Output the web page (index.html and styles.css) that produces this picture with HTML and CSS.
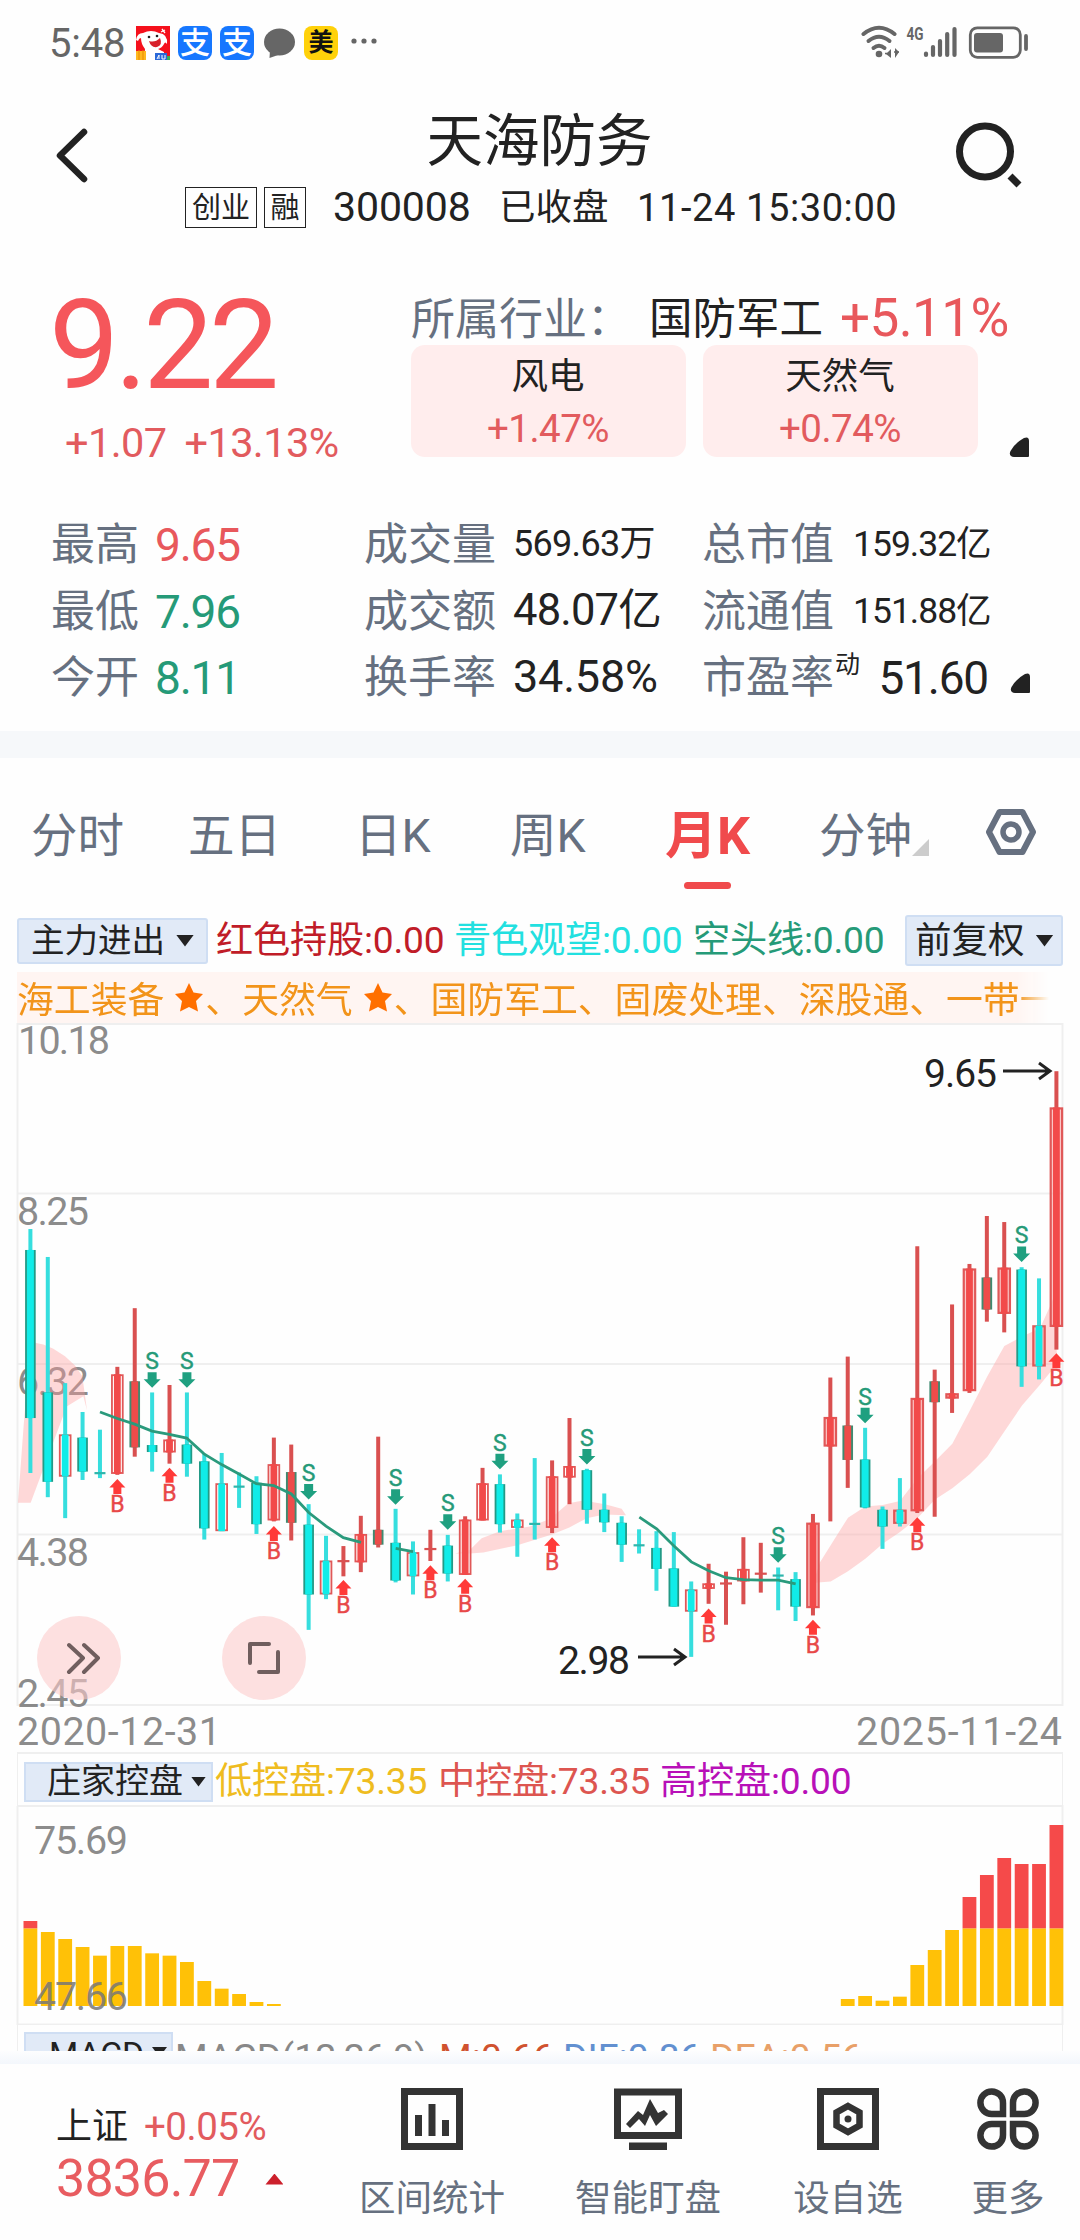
FILE: index.html
```html
<!DOCTYPE html>
<html lang="zh-CN">
<head>
<meta charset="utf-8">
<title>天海防务 300008</title>
<link rel="stylesheet" href="styles.css">
</head>
<body>
<div class="screen">
  <div class="status">
    <span class="clock">5:48</span>
    <svg class="app" viewBox="0 0 34 34"><rect width="34" height="34" fill="#f5101c"/><path d="M0 14Q1 7 7 7Q15 3 23 7Q32 8 31 18Q29 15 28 18Q26 22 22 23L28 26V34H8L9 23Q5 18 5 12Q3 12 2 15Z" fill="#fff"/><path d="M13 15Q19 17 24 12Q27 19 21 21Q15 22 13 15Z" fill="#d8202a"/><circle cx="13" cy="11" r="1.300" fill="#222"/><circle cx="21" cy="10" r="1.300" fill="#222"/><path d="M25 6l4-2M26 3l3 4" stroke="#fff" stroke-width="1.300"/><path d="M0 25H10V34H0Z" fill="#ffb81f"/><path d="M3 24V34M7 24V34" stroke="#e98b00"/><path d="M19 27H31V34H19Z" fill="#2a68d8"/><path d="M21 33l2-4v4M26 29v4h3v-4" stroke="#fff" fill="none"/><path d="M31 30h3v4h-3z" fill="#35b35a"/></svg>
    <span class="app alipay">支</span>
    <span class="app alipay">支</span>
    <svg class="app" viewBox="0 0 34 34"><ellipse cx="17.500" cy="16" rx="15.500" ry="13.500" fill="#666"/><path d="M8 24L7.500 32L19 28Z" fill="#666"/></svg>
    <span class="app meituan">美</span>
    <svg class="dots" viewBox="0 0 30 34"><g fill="#666"><circle cx="6" cy="15" r="2.600"/><circle cx="16" cy="15" r="2.600"/><circle cx="26" cy="15" r="2.600"/></g></svg>
    <svg class="signal" viewBox="860 20 172 44">
      <g fill="none" stroke="#666" stroke-width="4" stroke-linecap="round"><path d="M863.500 32Q879 19.500 894.500 32"/><path d="M868.500 39Q879 30.500 889.500 39"/><path d="M873.500 46Q879 41.500 884.500 46"/></g>
      <circle cx="879" cy="52" r="3.300" fill="#666"/><path d="M886 52l5-5v9zM899 50l-4-4v10z" fill="#666"/><path d="M885 51.500h6M894 50h5" stroke="#666" stroke-width="1.500"/>
      <text x="906.500" y="38" class="net" textLength="17" lengthAdjust="spacingAndGlyphs">4G</text>
      <g stroke="#666" stroke-width="4.200" stroke-linecap="round"><path d="M926 51.500V53M933 45V53M940 39V53M947.200 32V53M954.500 27V53"/></g>
      <rect x="970.300" y="25.800" width="50" height="29.500" rx="7" fill="none" stroke="#666" stroke-width="2.800"/><rect x="974" y="31" width="29" height="19.500" rx="3" fill="#666"/><path d="M1026 34V47" stroke="#666" stroke-width="3.800" stroke-linecap="round"/>
    </svg>
  </div>

  <div class="header">
    <svg class="back" viewBox="0 0 60 60"><path d="M43 7L19 30.500L43 54" fill="none" stroke="#222" stroke-width="6.500" stroke-linecap="round" stroke-linejoin="round"/></svg>
    <div class="heading">
      <h1>天海防务</h1>
      <div class="sub"><span class="tag">创业</span><span class="tag">融</span><span class="code">300008</span><span class="closed">已收盘</span><span class="time"><span>11-24</span> <span>15:30:00</span></span></div>
    </div>
    <svg class="search" viewBox="0 0 72 72"><circle cx="32" cy="31.500" r="25.500" fill="none" stroke="#222" stroke-width="7"/><path d="M57 56L66 65" stroke="#222" stroke-width="7"/></svg>
  </div>

  <div class="quote">
    <div>
      <div class="price">9.22</div>
      <div class="delta"><span>+1.07</span><span>+13.13%</span></div>
    </div>
    <div>
      <div class="industry"><span class="lbl">所属行业：</span><span>国防军工</span><span class="pct">+5.11%</span></div>
      <div class="cards">
        <div class="card"><div>风电</div><div class="up">+1.47%</div></div>
        <div class="card"><div>天然气</div><div class="up">+0.74%</div></div>
        <svg class="more" viewBox="0 0 20 20"><path d="M2 19Q0 17 1.500 14Q6 6 15 1Q20 -1 20 4V19Q20 20 19 20H5Q3 20 2 19Z" fill="#222"/></svg>
      </div>
    </div>
  </div>

  <div class="stats">
    <span class="lbl">最高</span><span class="num red">9.65</span><span class="lbl">成交量</span><span class="num small vol">569.63万</span><span class="lbl">总市值</span><span class="num small last">159.32亿</span><span></span>
    <span class="lbl">最低</span><span class="num green">7.96</span><span class="lbl">成交额</span><span class="num mid">48.07亿</span><span class="lbl">流通值</span><span class="num small last">151.88亿</span><span></span>
    <span class="lbl">今开</span><span class="num green">8.11</span><span class="lbl">换手率</span><span class="num mid rate">34.58%</span><span class="lbl">市盈率<sup>动</sup></span><span class="num last">51.60</span><svg class="more" viewBox="0 0 20 20"><path d="M2 19Q0 17 1.500 14Q6 6 15 1Q20 -1 20 4V19Q20 20 19 20H5Q3 20 2 19Z" fill="#222"/></svg>
  </div>
  <div class="band"></div>

  <div class="tabs">
    <span>分时</span><span>五日</span><span>日K</span><span>周K</span><span class="active">月K</span><span class="drop">分钟<i></i></span>
    <svg class="gear" viewBox="0 0 52 48"><path d="M14.500 4H37.500L48 24L37.500 44H14.500L4 24Z" fill="none" stroke="#667080" stroke-width="6" stroke-linejoin="round"/><circle cx="26" cy="24" r="8" fill="none" stroke="#667080" stroke-width="5.500"/></svg>
  </div>

  <div class="legend">
    <span class="select main">主力进出<i></i></span>
    <span class="c-hold">红色持股:0.00</span><span class="c-watch">青色观望:0.00</span><span class="c-short">空头线:0.00</span>
    <span class="select adj">前复权<i></i></span>
  </div>
  <div class="topics">海工装备<svg class="star" viewBox="0 0 41 36"><path d="M25 0l4.500 9.500 9.500 1.500-7 7 2 10.500L25 24 16 28.500 18 18 11 11 20.500 9.500z" fill="#ff6f00"/></svg>、天然气<svg class="star" viewBox="0 0 41 36"><path d="M25 0l4.500 9.500 9.500 1.500-7 7 2 10.500L25 24 16 28.500 18 18 11 11 20.500 9.500z" fill="#ff6f00"/></svg>、国防军工、固废处理、深股通、一带一路</div>

  <svg class="chart" id="kline" viewBox="0 1023 1080 729">
    <g fill="none" stroke="#efefef" stroke-width="2"><path d="M17.500 1024H1062.500V1705H17.500ZM17 1193.500H1062M17 1364H1062M17 1534.500H1062"/></g>
    <g class="axis">
      <text x="18" y="1053.500" textLength="92">10.18</text><text x="17" y="1224.500" textLength="72">8.25</text><text x="17" y="1394.500" textLength="72">6.32</text><text x="17" y="1565.500" textLength="72">4.38</text><text x="17" y="1706.500" textLength="72">2.45</text>
      <text x="17" y="1744.500" textLength="204">2020-12-31</text><text x="856" y="1744.500" textLength="206">2025-11-24</text>
    </g>
    <g id="bands"></g><g id="candles"></g><g id="lines"></g><g id="marks"></g>
    <g class="peak"><text x="924" y="1086.500" textLength="73">9.65</text><text x="558" y="1673.500" textLength="72">2.98</text></g>
    <g fill="none" stroke="#222" stroke-width="3"><path d="M1003 1071H1049M1039 1063L1050 1071L1039 1079M638 1657H684M674 1649L685 1657L674 1665"/></g>
    <g fill="#fccaca" fill-opacity=".58"><circle cx="79" cy="1658" r="42"/><circle cx="264" cy="1658" r="42"/></g>
    <g fill="none" stroke="#705e5e" stroke-width="4" stroke-linecap="round" stroke-linejoin="round"><path d="M69 1645L83 1658L69 1672M84 1645L98 1658L84 1672M250 1663V1644H269M259 1672H278V1652"/></g>
  </svg>

  <div class="legend control">
    <span class="select">庄家控盘<i></i></span>
    <span class="c-low">低控盘:73.35</span><span class="c-med">中控盘:73.35</span><span class="c-high">高控盘:0.00</span>
  </div>
  <svg class="chart" viewBox="0 1805 1080 220">
    <path d="M17 1806H1062.500V2025M17.500 1806V2025M17 2024.500H1063" fill="none" stroke="#efefef" stroke-width="2"/>
    <g id="bars"></g>
    <g class="axis"><text x="34" y="1853.500" textLength="94">75.69</text><text x="34" y="2009.500" textLength="94">47.66</text></g>
  </svg>
  <div class="legend macd">
    <span class="select">MACD<i></i></span>
    <span class="c-gray">MACD(12,26,9)</span><span class="c-m">M:0.66</span><span class="c-dif">DIF:0.86</span><span class="c-dea">DEA:0.56</span>
  </div>
  <div class="shade"></div>

  <div class="nav">
    <div class="index">
      <div class="row1"><span>上证</span><span class="up">+0.05%</span></div>
      <div class="row2"><span>3836.77</span><i></i></div>
    </div>
    <div class="item"><svg viewBox="0 0 62 62"><path d="M3.500 3.500H58.500V58.500H3.500Z" fill="none" stroke="#333" stroke-width="7"/><path d="M17.500 27V48M31 16V48M44.500 32V48" stroke="#333" stroke-width="7"/></svg><span>区间统计</span></div>
    <div class="item"><svg class="wide" viewBox="0 0 68 62"><path d="M3.500 4H64.500V47.500H3.500Z" fill="none" stroke="#333" stroke-width="7"/><path d="M15 54.500H53V62H15Z" fill="#333"/><path d="M12 36L24 23L29 27L36 11L44 25L50 22L54 26L42 38L36 27L31 38L25 31L16 40Z" fill="#333"/></svg><span>智能盯盘</span></div>
    <div class="item"><svg viewBox="0 0 62 62"><path d="M3.500 3.500H58.500V58.500H3.500Z" fill="none" stroke="#333" stroke-width="7"/><path d="M31 18L42.500 24.500V37.500L31 44L19.500 37.500V24.500Z" fill="none" stroke="#333" stroke-width="6.500"/><circle cx="31" cy="31" r="3.500" fill="#333"/></svg><span>设自选</span></div>
    <div class="item"><svg viewBox="0 0 62 62"><g fill="none" stroke="#333" stroke-width="6.500"><path d="M26 26H15A11.300 11.300 0 1 1 26 15Z"/><path d="M36 26H47A11.300 11.300 0 1 0 36 15Z"/><path d="M26 36H15A11.300 11.300 0 1 0 26 47Z"/><path d="M36 36H47A11.300 11.300 0 1 1 36 47Z"/></g></svg><span>更多</span></div>
  </div>
</div>
<script src="chart.js"></script>
</body>
</html>
```
FILE: styles.css
```css
* { box-sizing: border-box; }
body {
  margin: 0;
  background: #fefefe;
  font-family: Roboto, "Noto Sans CJK SC", sans-serif;
  color: #222;
}
svg { display: block; }
.screen { width: 1080px; height: 2240px; display: flex; flex-direction: column; overflow: hidden; white-space: nowrap; }
.screen > * { flex: none; }

/* status bar */
.status { height: 82px; padding: 0 49px; display: grid; grid-template-columns: 87px 42px 42px 42px 42px 44px 30px 482px 172px; align-items: center; color: #666; }
.clock { font-size: 40px; line-height: 84px; padding-top: 2px; letter-spacing: -0.2px; }
.app { width: 34px; height: 34px; }
.alipay, .meituan { border-radius: 8px; text-align: center; line-height: 33px; font-weight: 700; }
.alipay { background: #1677ff; color: #fff; font-size: 30px; font-weight: 500; }
.meituan { background: #ffd10a; color: #111; font-size: 25px; }
.dots { width: 30px; height: 34px; }
.signal { grid-column: 9; width: 172px; height: 44px; margin-top: 2px; }
.net { font: 700 18px Roboto, sans-serif; fill: #666; }

/* title */
.header { height: 145px; padding-top: 2px; display: grid; grid-template-columns: 41px 79px 1fr 127px; }
.back { grid-column: 2; width: 60px; height: 60px; margin-top: 41px; }
.heading { display: flex; flex-direction: column; }
h1 { margin: 12px 0 0 6px; font-size: 56.500px; font-weight: 400; line-height: 92px; text-align: center; }
.sub { margin: -1px 0 0 65px; display: grid; grid-template-columns: 79px 69px 166px 138px 260px; height: 40px; line-height: 41px; font-size: 36.500px; }
.tag { border: 1.500px solid #222; font-size: 29px; line-height: 41px; height: 41px; text-align: center; width: 72px; }
.tag + .tag { width: 42px; }
.code { font-size: 41px; letter-spacing: -0.1px; }
.closed { padding-top: 0; }
.time { font-size: 38px; letter-spacing: 0.6px; padding-top: 1px; }
.search { width: 72px; height: 72px; margin-top: 36px; }

/* price block */
.quote { margin-top: 56px; height: 228px; padding-left: 49px; display: grid; grid-template-columns: 362px 1fr; }
.price { font-size: 125px; line-height: 120px; letter-spacing: -4.500px; color: #f5565b; padding-top: 3px; }
.delta { display: flex; gap: 18px; margin: 7px 0 0 16px; font-size: 41.500px; line-height: 60px; letter-spacing: -0.6px; color: #e25b5e; }
.lbl { color: #667080; font-size: 44px; padding-top: 1px; }
.industry { display: grid; grid-template-columns: 238px 191px 1fr; line-height: 54px; height: 54px; font-size: 43.500px; margin-top: 8px; }
.industry .lbl { padding-top: 2px; }
.industry span:nth-child(2) { padding-top: 2px; }
.pct { color: #e8585c; font-size: 53px; letter-spacing: -0.6px; }
.cards { display: flex; gap: 17px; align-items: flex-end; }
.card { width: 275px; height: 112px; border-radius: 14px; background: #ffeded; text-align: center; font-size: 36.500px; line-height: 52px; padding: 6px 1px 0 0; }
.card + .card { margin-right: 14px; }
.up { color: #e25b5e; font-size: 38.500px; letter-spacing: -0.5px; line-height: 51px; }
.more { width: 20px; height: 20px; }

.stats { display: grid; grid-template-columns: 104px 209px 149px 189px 151px 135px 1fr; grid-auto-rows: 66.500px; line-height: 66.500px; padding-left: 51px; height: 220px; }
.stats .num { font-size: 46px; letter-spacing: -1.2px; padding-top: 1px; }
.stats .num.mid { font-size: 43.500px; letter-spacing: -0.8px; padding-top: 0; }
.stats .num.rate { font-size: 45px; letter-spacing: -0.2px; }
.stats .num.small { font-size: 35.500px; letter-spacing: -1px; padding-top: 0; }
.stats .num.vol { font-size: 36px; letter-spacing: -0.7px; }
.stats .last { text-align: right; }
.stats .num.small.last { padding-right: 3px; }
.stats sup { font-size: 25px; line-height: 1; vertical-align: 20px; color: #222; margin-left: 1px; }
.stats .more { margin: 29px 0 0 22px; }
.red { color: #e8585c; }
.green { color: #259a78; }
.band { height: 27px; background: #f6f8fa; }

/* period tabs */
.tabs { height: 156px; padding: 46px 0 0 31px; display: grid; grid-template-columns: 157px 167px 155px 155px 154px 166px 52px; font-size: 46.500px; line-height: 65px; color: #667080; }
.active { color: #f04a4c; font-weight: 700; font-size: 52px; }
.active::after { content: ""; display: block; width: 47px; height: 7px; border-radius: 4px; background: #f04a4c; margin: 13px 0 0 19px; }
.drop { display: flex; }
.drop i { width: 17px; height: 17px; background: #ccc; clip-path: polygon(100% 0, 100% 100%, 0 100%); margin-top: 35px; }
.gear { width: 52px; height: 48px; margin-top: 4px; }

/* indicator rows */
.legend { height: 51px; display: grid; grid-template-columns: 199px 238px 239px 212px 158px; padding-left: 17px; align-items: center; font-size: 37.200px; line-height: 53px; letter-spacing: -0.2px; }
.select { background: #e1eaf7; border: 2px solid #cfdef3; border-radius: 3px; display: flex; align-items: center; color: #222; letter-spacing: 0; }
.select i { width: 18px; height: 12px; background: #222; clip-path: polygon(0 0, 100% 0, 50% 100%); }
.main { width: 191px; height: 46px; font-size: 33.500px; padding-left: 12px; gap: 11px; }
.adj { width: 158px; height: 51px; font-size: 36.500px; padding-left: 8px; gap: 11px; }
.c-hold { color: #c01c28; }
.c-watch { color: #22e0e0; }
.c-short { color: #259a78; }
.topics { margin: 7px 17px 0; height: 51px; line-height: 51px; padding-top: 6px; font-size: 36.850px; color: #f2941a; display: flex; align-items: center; overflow: hidden; background: #fff5f2; -webkit-mask-image: linear-gradient(90deg, #000 1000px, transparent 1032px); }
.star { width: 41px; height: 36px; flex: none; }

.chart { width: 1080px; }
.axis text { font: 39.500px Roboto, sans-serif; fill: #777; fill-opacity: .85; }
.peak text { font: 39px Roboto, sans-serif; fill: #222; }
.mark { font: 23px Roboto, sans-serif; text-anchor: middle; stroke-width: .4px; }

.control { height: 53px; margin: 0 17px; border: 2px solid #efefef; border-width: 2px 1px 0; padding-left: 6px; grid-template-columns: 191px 223px 222px 200px; line-height: 55px; }
.control .select { width: 189px; height: 40px; border-radius: 0; font-size: 34px; padding-left: 21px; gap: 8px; }
.control .select i { width: 15px; height: 10px; }
.c-low { color: #efbc20; }
.c-med { color: #dd5550; }
.c-high { color: #b810b8; }
.macd { height: 26px; margin: 0 17px; border: 1px solid #efefef; border-width: 0 1px; padding-left: 6px; grid-template-columns: 151px 264px 124px 147px 200px; overflow: hidden; align-items: start; line-height: 64px; letter-spacing: 0; font-size: 37.500px; }
.macd .select { width: 149px; height: 46px; margin-top: 7px; border-radius: 0; font-size: 33.500px; padding-left: 23px; gap: 8px; line-height: 50px; }
.macd .select i { width: 15px; height: 10px; margin-top: -6px; }
.c-gray { color: #888; }
.c-m { color: #d0522f; }
.c-dif { color: #6290d0; }
.c-dea { color: #e8a068; }
.shade { height: 13px; background: linear-gradient(#fdfdfe, #f3f7fc); }

/* bottom bar */
.nav { height: 176px; display: grid; grid-template-columns: 325px 214px 218px 182px 138px; background: #fefefe; padding-top: 24px; }
.index { padding: 15px 0 0 56px; }
.row1 { display: flex; gap: 16px; font-size: 36px; line-height: 48px; }
.row1 .up { line-height: 48px; }
.row2 { display: flex; align-items: center; gap: 26px; font-size: 52px; line-height: 56px; letter-spacing: -0.8px; color: #e85c60; }
.row2 i { width: 18px; height: 11px; background: #cc202c; clip-path: polygon(50% 0, 100% 100%, 0 100%); }
.item { display: flex; flex-direction: column; align-items: center; font-size: 36.500px; color: #667080; line-height: 54px; gap: 22px; }
.item svg { width: 62px; height: 62px; }
.item svg.wide { width: 68px; }
```
FILE: chart.js
```js
// Price axis: converts a drawn level to a vertical position in the chart.
const Y = p => 1020 + p / 2.148;
const X = i => 30.4 + i * 17.39;
const put = (id, html) => { document.getElementById(id).innerHTML = html; };

// kind, high, body top, body bottom, low
// g: falling, h: hollow with cyan core, r: rising, m: falling with red core
const candles = `g 449 494 855 973|g 509 800 992 1025|h 780 890 981 1070|g 842 897 970 988|g 880 971 976 984|r 745 761 975 977|m 619 776 918 938|g 800 913 928 970|r 784 901 929 953|g 800 912 953 981|g 932 948 1092 1116|h 930 995 1098 1098|g 972 1000 1004 1048|g 980 994 1083 1104|r 897 954 1075 1077|m 912 971 1080 1118|g 1040 1084 1234 1310|h 1108 1161 1234 1244|r 1130 1160 1164 1195|r 1065 1104 1165 1186|m 895 1095 1127 1133|g 1050 1123 1204 1208|h 1120 1143 1195 1234|r 1095 1134 1138 1162|g 1106 1129 1189 1206|r 1066 1073 1192 1192|r 962 995 1075 1075|g 976 997 1083 1101|h 1060 1073 1091 1153|g 941 1080 1084 1116|r 946 980 1091 1102|r 855 958 983 1040|g 964 967 1052 1082|g 1017 1052 1079 1100|g 1066 1080 1127 1164|g 1094 1126 1130 1146|g 1098 1134 1179 1226|g 1100 1178 1260 1260|h 1206 1223 1271 1368|r 1168 1210 1222 1254|r 1185 1208 1212 1299|r 1111 1179 1206 1255|r 1123 1187 1191 1230|g 1176 1191 1195 1268|g 1186 1201 1260 1291|r 1061 1080 1263 1279|r 768 853 916 1077|m 723 871 945 1005|g 876 944 1047 1049|g 1045 1052 1088 1136|h 984 1052 1082 1088|r 486 812 1055 1059|m 751 776 821 1067|r 611 802 813 844|r 524 534 797 801|m 421 553 622 648|r 434 532 631 671|g 531 536 744 788|h 555 656 744 772|r 110 188 659 708`
  .split('|').map(s => s.split(' '));

const box = (x, w, a, b, attr) => `<rect x="${x - w / 2}" y="${a}" width="${w}" height="${b - a}" ${attr}/>`;
put('candles', candles.map(([k, ...v], i) => {
  const x = X(i), [hi, top, bot, lo] = v.map(n => Y(+n));
  const cyan = k === 'g' || k === 'h';
  const wick = box(x, 4, hi, lo, `fill="${cyan ? '#36dede' : '#d95050'}"`);
  if (bot - top < 3) return wick + box(x, k === 'g' ? 11 : 12, top, top + 2.2, `fill="${cyan ? '#2fb5ac' : '#d95050'}"`);
  if (k === 'g') return wick + box(x, 10.6, top, bot, 'fill="#239a86"') + box(x, 7, top, bot, 'fill="#10ece8"');
  if (k === 'm') return wick + box(x, 10.6, top, bot, 'fill="#3f8a70"') + box(x, 6.8, top, bot, 'fill="#ee4c4a"');
  const core = k === 'h' ? '#10ece8' : '#f24a4a';
  const late = i > 44;
  return wick + box(x, late ? 11.4 : 10.8, top + .9, bot - .9, `fill="${late ? '#f9a0a0' : '#fff'}" fill-opacity=".6" stroke="#e05858" stroke-width="${late ? 2.2 : 1.8}"`) + box(x, 6.8, top, bot, `fill="${core}"`);
}).join(''));

const pts = (x0, list) => list.split(' ').map(p => { const [x, y] = p.split(','); return `${x0 + x / 3},${Y(y)}`; }).join(' ');
const line = (x0, list) => `<polyline points="${pts(x0, list)}" fill="none" stroke="#2a9a7c" stroke-width="2.8"/>`;
put('lines',
  line(0, '300,842 352,856 404,868 456,883 508,890 560,898 612,932 665,955 717,975 769,996 821,1000 874,1018 926,1058 978,1087 1030,1112 1083,1122') +
  line(360, '107,1135 159,1142') +
  line(360, '838,1068 890,1093 942,1130 994,1164 1046,1183 1098,1198 1150,1202 1203,1203 1255,1203 1307,1211'));

const band = (x0, list) => `<polygon points="${pts(x0, list)}" fill="#ff9c9c" fill-opacity=".38"/>`;
put('bands',
  band(0, '105,693 130,697 160,706 195,722 225,742 247,765 261,838 250,808 200,830 92,1037 54,1037 70,880 90,700') +
  band(360, '285,1146 330,1138 365,1113 420,1098 510,1088 570,1072 625,1038 670,1032 735,1040 785,1050 798,1064 733,1062 680,1070 628,1090 576,1105 472,1128 370,1144 330,1146') +
  band(720, '245,1211 280,1209 300,1165 332,1128 384,1069 436,1045 488,1042 540,1033 592,985 645,948 697,910 750,838 802,765 853,700 906,680 960,662 990,615 1010,580 1010,740 958,785 906,828 853,884 802,938 750,975 697,1006 645,1030 592,1070 540,1100 488,1125 436,1157 384,1184 332,1206'));

const sell = [[7, 790], [9, 790], [16, 1030], [21, 1041], [24, 1095], [27, 965], [32, 955], [43, 1166], [48, 866], [57, 520]];
const buy = [[5, 986], [8, 962], [14, 1087], [18, 1203], [23, 1171], [25, 1200], [30, 1111], [39, 1264], [45, 1288], [51, 1068], [59, 716]];
put('marks',
  sell.map(([i, p]) => `<path d="M${X(i)} ${Y(p)}l-8.500 -8.500h4v-7h9v7h4z" fill="#1fa080"/><text class="mark" x="${X(i)}" y="${Y(p - 40)}" fill="#259a78" stroke="#259a78">S</text>`).join('') +
  buy.map(([i, p]) => `<path d="M${X(i)} ${Y(p)}l-8 8.500h4v6.500h8v-6.500h4z" fill="#ff3a38"/><text class="mark" x="${X(i)}" y="${Y(p + 71)}" fill="#e84848" stroke="#e84848">B</text>`).join(''));

// Control histogram: first group starts at bar 0, second at bar 47.
const bars = [[0, [663, 696, 717, 741, 767, 738, 738, 760, 767, 786, 843, 866, 882, 906, 912]], [47, [897, 888, 902, 890, 795, 750, 690, 591, 525, 474, 492, 492, 375]]];
const B = p => 1700 + p / 3;
put('bars', bars.map(([s, a]) => a.map((t, k) => {
  const x = X(s + k);
  return box(x, 13.8, B(Math.max(t, 685)), 2006, 'fill="#ffc107"') + (t < 685 ? box(x, 13.8, B(t), B(685), 'fill="#f54a4a"') : '');
}).join('')).join(''));
```
